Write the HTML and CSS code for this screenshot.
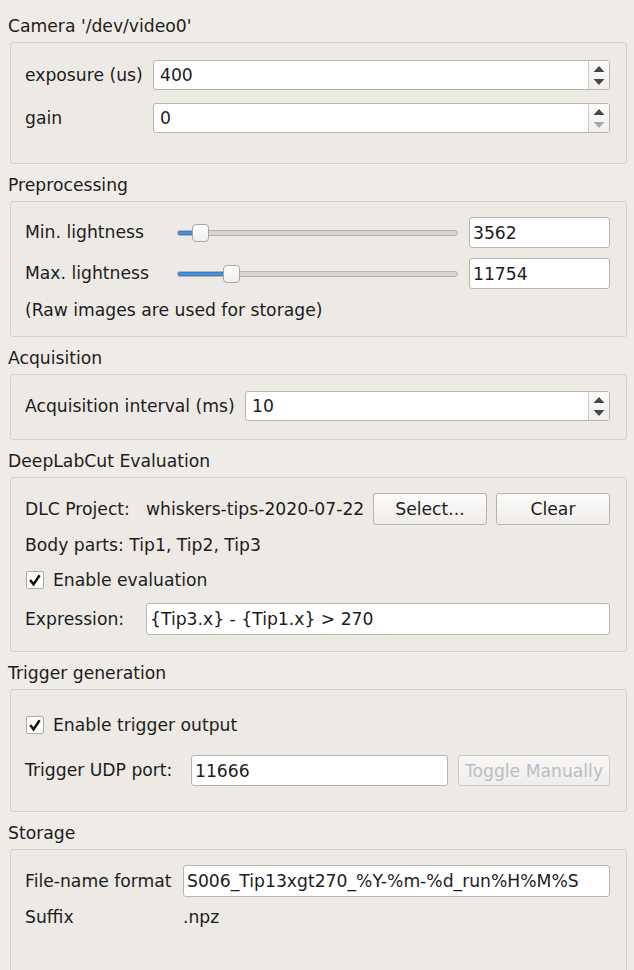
FILE: index.html
```html
<!DOCTYPE html>
<html>
<head>
<meta charset="utf-8">
<link rel="stylesheet" href="styles.css">
</head>
<body>
<div class="window">

  <div class="group g1">
    <div class="title">Camera '/dev/video0'</div>
    <div class="box box1">
      <div class="form f-cam">
        <div class="lbl">exposure (us)</div>
        <div class="spin"><span class="val">400</span><span class="arrows"><svg width="20" height="28" viewBox="0 0 20 28"><path d="M4.5 11 L15.5 11 L10 5 Z" fill="#474747"/><path d="M4.5 18 L15.5 18 L10 24 Z" fill="#474747"/></svg></span></div>
        <div class="lbl">gain</div>
        <div class="spin"><span class="val">0</span><span class="arrows"><svg width="20" height="28" viewBox="0 0 20 28"><path d="M4.5 11 L15.5 11 L10 5 Z" fill="#474747"/><path d="M4.5 18 L15.5 18 L10 24 Z" fill="#a9a9a9"/></svg></span></div>
      </div>
    </div>
  </div>

  <div class="group g2">
    <div class="title">Preprocessing</div>
    <div class="box box2">
      <div class="form f-pre">
        <div class="lbl">Min. lightness</div>
        <div class="slider"><div class="groove"><div class="fill" style="width: 24px"></div></div><div class="handle" style="left: 15px"></div></div>
        <div class="edit">3562</div>
        <div class="lbl">Max. lightness</div>
        <div class="slider"><div class="groove"><div class="fill" style="width: 55px"></div></div><div class="handle" style="left: 46px"></div></div>
        <div class="edit">11754</div>
      </div>
      <div class="note">(Raw images are used for storage)</div>
    </div>
  </div>

  <div class="group g3">
    <div class="title">Acquisition</div>
    <div class="box box3">
      <div class="form f-acq">
        <div class="lbl">Acquisition interval (ms)</div>
        <div class="spin"><span class="val">10</span><span class="arrows"><svg width="20" height="28" viewBox="0 0 20 28"><path d="M4.5 11 L15.5 11 L10 5 Z" fill="#474747"/><path d="M4.5 18 L15.5 18 L10 24 Z" fill="#474747"/></svg></span></div>
      </div>
    </div>
  </div>

  <div class="group g4">
    <div class="title">DeepLabCut Evaluation</div>
    <div class="box box4">
      <div class="row dlc">
        <div class="lbl w-dlc">DLC Project:</div>
        <div class="lbl grow">whiskers-tips-2020-07-22</div>
        <div class="btn">Select...</div>
        <div class="btn">Clear</div>
      </div>
      <div class="row body">Body parts: Tip1, Tip2, Tip3</div>
      <div class="row check">
        <span class="cb"><svg width="16" height="16" viewBox="0 0 16 16"><path d="M3.2 8 L6.5 12.4 L12.6 3.2" fill="none" stroke="#111" stroke-width="2.5" stroke-linejoin="miter"/></svg></span>
        <span>Enable evaluation</span>
      </div>
      <div class="row expr">
        <div class="lbl w-dlc">Expression:</div>
        <div class="edit grow">{Tip3.x} - {Tip1.x} &gt; 270</div>
      </div>
    </div>
  </div>

  <div class="group g5">
    <div class="title">Trigger generation</div>
    <div class="box box5">
      <div class="row check trig-check">
        <span class="cb"><svg width="16" height="16" viewBox="0 0 16 16"><path d="M3.2 8 L6.5 12.4 L12.6 3.2" fill="none" stroke="#111" stroke-width="2.5" stroke-linejoin="miter"/></svg></span>
        <span>Enable trigger output</span>
      </div>
      <div class="row trig">
        <div class="lbl w-trig">Trigger UDP port:</div>
        <div class="edit grow">11666</div>
        <div class="btn disabled toggle">Toggle Manually</div>
      </div>
    </div>
  </div>

  <div class="group g6">
    <div class="title">Storage</div>
    <div class="box box6">
      <div class="row store">
        <div class="lbl w-store">File-name format</div>
        <div class="edit grow">S006_Tip13xgt270_%Y-%m-%d_run%H%M%S</div>
      </div>
      <div class="row suffix">
        <div class="lbl w-store">Suffix</div>
        <div class="lbl">.npz</div>
      </div>
    </div>
  </div>

</div>
</body>
</html>
```

FILE: styles.css
```css
html, body {
  margin: 0;
  padding: 0;
  background: #efebe7;
  width: 634px;
  height: 970px;
  overflow: hidden;
}

.window {
  font-family: "DejaVu Sans", "Noto Sans", sans-serif;
  font-size: 17.2px;
  color: #1c1c1c;
  padding: 16px 7px 0 10px;
  box-sizing: border-box;
  width: 634px;
}

.group + .group {
  margin-top: 11px;
}

.title {
  height: 20px;
  line-height: 21px;
  margin-left: -2px;
  margin-bottom: 6px;
  white-space: nowrap;
}

.box {
  border: 1px solid #d3cfca;
  border-radius: 3px;
  background: #edeae6;
  box-sizing: border-box;
  padding: 0 16px 0 14px;
}

.box1 { height: 122px; padding-top: 17px; }
.box2 { height: 136px; padding-top: 15px; }
.box3 { height: 66px; padding-top: 16px; }
.box4 { height: 175px; padding-top: 15px; }
.box5 { height: 123px; padding-top: 24px; }
.box6 { height: 140px; padding-top: 15px; }

.form {
  display: grid;
  align-items: center;
}

.f-cam {
  grid-template-columns: 128px 1fr;
  grid-auto-rows: 30px;
  row-gap: 13px;
}

.f-acq {
  grid-template-columns: 220px 1fr;
  grid-auto-rows: 30px;
}

.f-pre {
  grid-template-columns: 141px 1fr 141px;
  grid-auto-rows: 31px;
  row-gap: 10px;
  column-gap: 11px;
}

.lbl {
  white-space: nowrap;
  line-height: 21px;
}

.spin {
  height: 30px;
  box-sizing: border-box;
  border: 1px solid #b9b5b1;
  border-radius: 3px;
  background: #fff;
  display: flex;
  align-items: center;
  overflow: hidden;
}

.spin .val {
  flex: 1;
  padding-left: 6px;
}

.spin .arrows {
  width: 20px;
  height: 100%;
  border-left: 1px solid #cdc9c5;
  background: linear-gradient(#fbfaf9, #f1efed);
  display: flex;
  align-items: center;
  justify-content: center;
}

.spin .arrows svg {
  display: block;
}

.edit {
  height: 31px;
  box-sizing: border-box;
  border: 1px solid #b9b5b1;
  border-radius: 3px;
  background: #fff;
  display: flex;
  align-items: center;
  padding-left: 3px;
  white-space: nowrap;
  overflow: hidden;
}

.slider {
  position: relative;
  height: 20px;
}

.groove {
  position: absolute;
  left: 0;
  right: 0;
  top: 7px;
  height: 6px;
  box-sizing: border-box;
  border: 1px solid #b5b1ad;
  border-radius: 3px;
  background: #d9d5d1;
  overflow: hidden;
}

.groove .fill {
  height: 100%;
  background: #4a90d9;
  box-shadow: inset 0 0 0 1px #3a7fc8;
}

.handle {
  position: absolute;
  top: 1px;
  width: 17px;
  height: 18px;
  box-sizing: border-box;
  border: 1px solid #a9a5a1;
  border-radius: 4px;
  background: linear-gradient(#ffffff, #f1efed);
}

.note {
  margin-top: 10px;
  line-height: 22px;
  white-space: nowrap;
}

.row {
  display: flex;
  align-items: center;
  white-space: nowrap;
}

.grow {
  flex: 1;
  min-width: 0;
}

.w-dlc { width: 121px; flex: none; }
.w-trig { width: 166px; flex: none; }
.w-store { width: 158px; flex: none; }

.dlc {
  height: 32px;
  gap: 9px;
}

.dlc .w-dlc {
  margin-right: -9px;
}

.btn {
  height: 32px;
  width: 114px;
  flex: none;
  box-sizing: border-box;
  border: 1px solid #b6b2ae;
  border-radius: 3px;
  background: linear-gradient(#fcfbfa, #efedeb);
  display: flex;
  align-items: center;
  justify-content: center;
}

.btn.disabled {
  color: #b9bec4;
  border-color: #cfcbc7;
  background: linear-gradient(#f8f7f6, #f0eeec);
}

.body {
  margin-top: 10px;
  height: 20px;
}

.check {
  height: 22px;
  margin-top: 14px;
  margin-left: 1px;
}

.cb {
  width: 18px;
  height: 18px;
  box-sizing: border-box;
  border: 1px solid #aeaaa6;
  border-radius: 2px;
  background: #fff;
  display: flex;
  align-items: center;
  justify-content: center;
  margin-right: 9px;
}

.cb svg { display: block; }

.expr {
  margin-top: 12px;
}

.expr .edit {
  height: 32px;
}

.trig-check {
  margin-top: 0;
  height: 21px;
}

.trig {
  margin-top: 20px;
  gap: 10px;
}

.trig .w-trig {
  margin-right: -10px;
}

.trig .edit,
.toggle {
  height: 31px;
}

.toggle {
  width: 152px;
}

.store .edit {
  height: 32px;
}

.suffix {
  margin-top: 10px;
  height: 20px;
}
```
